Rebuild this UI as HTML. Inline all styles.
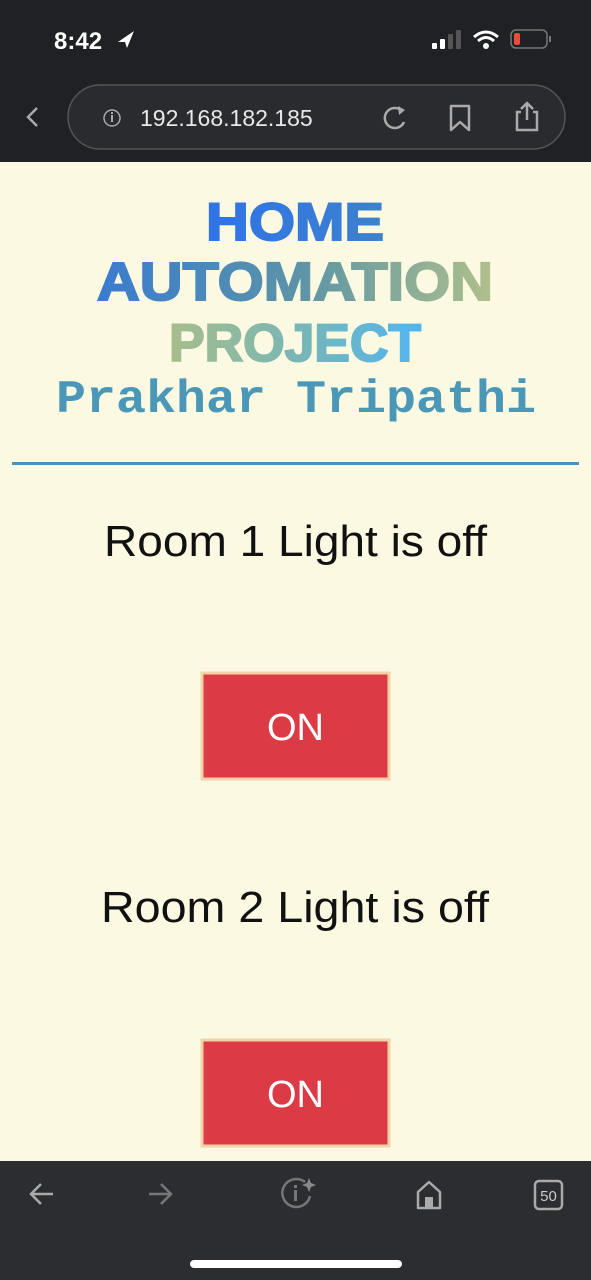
<!DOCTYPE html>
<html><head><meta charset="utf-8"><style>
html,body{margin:0;padding:0;width:591px;height:1280px;overflow:hidden;background:#fbf9e2;}
svg{display:block}
</style></head><body>
<svg width="591" height="1280" viewBox="0 0 591 1280" xmlns="http://www.w3.org/2000/svg">
<defs>
<linearGradient id="g0" x1="205" y1="0" x2="385" y2="0" gradientUnits="userSpaceOnUse">
<stop offset="0" stop-color="#2f73e8"/><stop offset="1" stop-color="#3c82cc"/></linearGradient>
<linearGradient id="g1" x1="95" y1="0" x2="495" y2="0" gradientUnits="userSpaceOnUse">
<stop offset="0" stop-color="#3a7bd0"/><stop offset="0.5" stop-color="#5a93a8"/><stop offset="1" stop-color="#b0c08a"/></linearGradient>
<linearGradient id="g3" x1="165" y1="0" x2="425" y2="0" gradientUnits="userSpaceOnUse">
<stop offset="0" stop-color="#a9bd8a"/><stop offset="0.5" stop-color="#7ab6b4"/><stop offset="1" stop-color="#4fb6f2"/></linearGradient>
</defs>
<rect x="0" y="0" width="591" height="162" fill="#202124"/>
<text x="54" y="49" font-family="Liberation Sans, sans-serif" font-size="24" font-weight="bold" fill="#fff">8:42</text>
<path d="M118 42 L134 31 L127 48 L125 42 Z" fill="#fff"/>
<rect x="432" y="43" width="5" height="6" rx="1" fill="#fff"/><rect x="440" y="39" width="5" height="10" rx="1" fill="#fff"/><rect x="448" y="34" width="5" height="15" rx="1" fill="#555"/><rect x="456" y="30" width="5" height="19" rx="1" fill="#555"/>
<path d="M474 37 Q486 27 498 37 M478 41 Q486 34 494 41" stroke="#fff" stroke-width="3" fill="none"/><circle cx="486" cy="46" r="3" fill="#fff"/>
<rect x="511" y="30" width="36" height="18" rx="5" fill="none" stroke="#777" stroke-width="1.5"/><rect x="514" y="33" width="6" height="12" rx="2" fill="#e74c3c"/><rect x="549" y="36" width="2" height="6" fill="#777"/>
<path d="M37 108 L28 117 L37 126" stroke="#aaa" stroke-width="2.5" fill="none"/>
<rect x="68" y="85" width="497" height="64" rx="32" fill="#2a2b2f" stroke="#555" stroke-width="1.5"/>
<circle cx="112" cy="118" r="8" fill="none" stroke="#aaa" stroke-width="1.5"/><rect x="111" y="115" width="2" height="7" fill="#aaa"/><rect x="111" y="112" width="2" height="2" fill="#aaa"/>
<text x="140" y="126" font-family="Liberation Sans, sans-serif" font-size="23" fill="#e8e8e8">192.168.182.185</text>
<path d="M402 111 A10 10 0 1 0 404 122" stroke="#aaa" stroke-width="2.5" fill="none"/><path d="M398 106 L405 110 L399 115 Z" fill="#aaa"/>
<path d="M451 106 L469 106 L469 130 L460 122 L451 130 Z" stroke="#aaa" stroke-width="2.5" fill="none" stroke-linejoin="round"/>
<path d="M521 112 L517 112 L517 130 L537 130 L537 112 L533 112 M527 120 L527 104 M521 109 L527 103 L533 109" stroke="#aaa" stroke-width="2.5" fill="none"/>

<text x="206" y="240" font-family="Liberation Sans, sans-serif" font-weight="bold" font-size="53" fill="url(#g0)" stroke="url(#g0)" stroke-width="2" textLength="178" lengthAdjust="spacingAndGlyphs">HOME</text>
<text x="97" y="300" font-family="Liberation Sans, sans-serif" font-weight="bold" font-size="54" fill="url(#g1)" stroke="url(#g1)" stroke-width="2" textLength="396" lengthAdjust="spacingAndGlyphs">AUTOMATION</text>
<text x="169" y="361" font-family="Liberation Sans, sans-serif" font-weight="bold" font-size="53" fill="url(#g3)" stroke="url(#g3)" stroke-width="2" textLength="252" lengthAdjust="spacingAndGlyphs">PROJECT</text>
<text x="56" y="412" font-family="Liberation Mono, monospace" font-weight="bold" font-size="46" fill="#4a97b8" textLength="480" lengthAdjust="spacingAndGlyphs">Prakhar Tripathi</text>
<rect x="12" y="462" width="567" height="3" fill="#4a8fc0"/>

<text x="104" y="556" font-family="Liberation Sans, sans-serif" font-size="44" fill="#111" textLength="383" lengthAdjust="spacingAndGlyphs">Room 1 Light is off</text>
<rect x="202" y="673" width="187" height="106" fill="#dc3a45" stroke="#f2d3a8" stroke-width="3"/>
<text x="295.5" y="740" text-anchor="middle" font-family="Liberation Sans, sans-serif" font-size="38" fill="#fff">ON</text>

<text x="101" y="922" font-family="Liberation Sans, sans-serif" font-size="44" fill="#111" textLength="388" lengthAdjust="spacingAndGlyphs">Room 2 Light is off</text>
<rect x="202" y="1040" width="187" height="106" fill="#dc3a45" stroke="#f2d3a8" stroke-width="3"/>
<text x="295.5" y="1107" text-anchor="middle" font-family="Liberation Sans, sans-serif" font-size="38" fill="#fff">ON</text>

<rect x="0" y="1161" width="591" height="119" fill="#2c2d31"/>
<path d="M53 1194 L31 1194 M41 1184 L31 1194 L41 1204" stroke="#aaa" stroke-width="2.5" fill="none"/>
<path d="M149 1194 L171 1194 M161 1184 L171 1194 L161 1204" stroke="#777" stroke-width="2.5" fill="none"/>
<path d="M305 1182 A14 14 0 1 0 310 1196" stroke="#777" stroke-width="2.5" fill="none"/><rect x="294" y="1190" width="3" height="11" fill="#777"/><rect x="294" y="1185" width="3" height="3" fill="#777"/>
<path d="M309 1178 L311 1183 L316 1185 L311 1187 L309 1192 L307 1187 L302 1185 L307 1183 Z" fill="#888"/>
<path d="M418 1208 L418 1192 L429 1182 L440 1192 L440 1208 Z" stroke="#aaa" stroke-width="2.5" fill="none" stroke-linejoin="round"/><rect x="425" y="1197" width="8" height="11" fill="#aaa"/>
<rect x="535" y="1181" width="27" height="28" rx="4" fill="none" stroke="#aaa" stroke-width="2.5"/>
<text x="548.5" y="1201" text-anchor="middle" font-family="Liberation Sans, sans-serif" font-size="15" fill="#ccc">50</text>
<rect x="190" y="1260" width="212" height="8" rx="4" fill="#fff"/>
</svg>
</body></html>
